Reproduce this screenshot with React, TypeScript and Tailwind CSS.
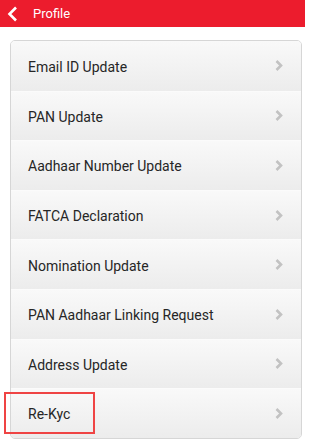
import React from "react";

const items = [
  "Email ID Update",
  "PAN Update",
  "Aadhaar Number Update",
  "FATCA Declaration",
  "Nomination Update",
  "PAN Aadhaar Linking Request",
  "Address Update",
  "Re-Kyc",
];

function Chevron() {
  return (
    <svg width="8" height="11" viewBox="0 0 8 11" className="shrink-0">
      <path d="M1.5 1 L6 5.5 L1.5 10" fill="none" stroke="#c2c2c2" strokeWidth="2.6" />
    </svg>
  );
}

export default function App() {
  return (
    <div className="relative w-[305px] h-[443px] overflow-hidden bg-white" style={{ fontFamily: "Roboto, 'Noto Sans', sans-serif" }}>
      <div className="h-[27px] bg-[#ec1c2d] flex items-center">
        <svg width="12" height="18" viewBox="0 0 12 18" className="ml-[6px]">
          <path d="M10 2.5 L3.5 9 L10 15.5" fill="none" stroke="white" strokeWidth="2.6" />
        </svg>
        <span className="ml-[15px] text-[13px] text-white">Profile</span>
      </div>
      <div className="mt-[13px] ml-[10px] w-[292px] rounded-[5px] border border-[#d6d6d6] overflow-hidden">
        {items.map((t, i) => (
          <div
            key={t}
            className={`h-[49.6px] flex items-center justify-between pl-[17px] pr-[18px] bg-gradient-to-b from-[#f9f9f9] to-[#ececec] ${i > 0 ? "border-t border-[#fbfbfb]" : ""}`}
          >
            <span className="text-[14px] text-[#262626] pt-[3px]">{t}</span>
            <Chevron />
          </div>
        ))}
      </div>
      <div className="absolute left-[4px] top-[392px] w-[91px] h-[42px] border-2 border-[#ef4444]" />
    </div>
  );
}
